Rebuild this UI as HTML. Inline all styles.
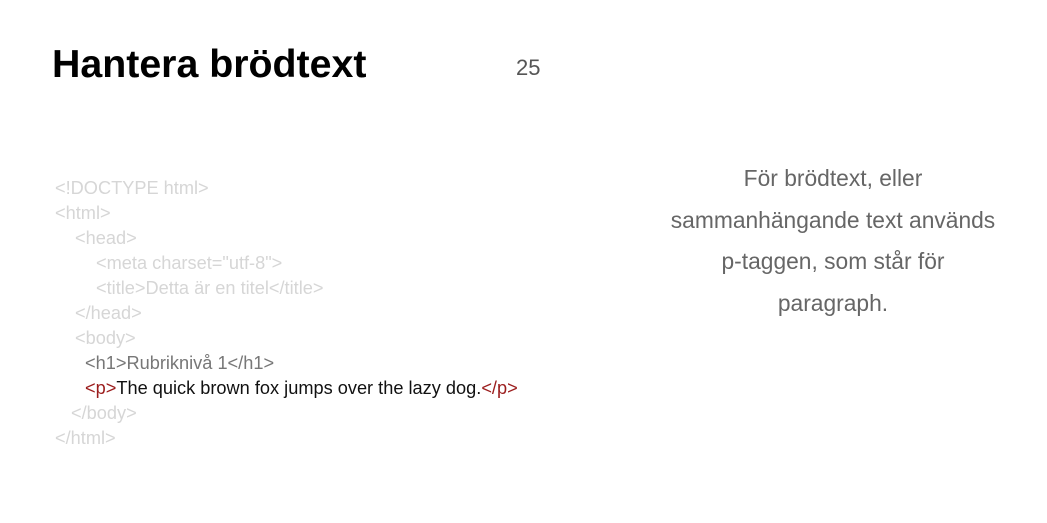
<!DOCTYPE html>
<html><head><meta charset="utf-8"><style>
body{margin:0;width:1047px;height:523px;background:#fff;font-family:"Liberation Sans",Arial,sans-serif;position:relative;overflow:hidden}
.t{position:absolute;left:52px;top:40px;font-size:39.3px;font-weight:bold;color:#000;line-height:48px}
.n{position:absolute;left:516px;top:54px;font-size:22px;color:#555;line-height:28px}
.code{position:absolute;left:55px;top:176px;font-size:18.2px;line-height:25px;color:#d6d6d6}
.code div{height:25px;white-space:pre}
.code .m{color:#777}.code .r{color:#9b1c1c}.code .k{color:#111}
.right{position:absolute;left:583px;width:500px;top:158px;text-align:center;font-size:22.8px;line-height:41.5px;color:#666}
</style></head><body>
<div class="t">Hantera brödtext</div>
<div class="n">25</div>
<div class="code"><div>&lt;!DOCTYPE html&gt;</div><div>&lt;html&gt;</div><div style="padding-left:20px">&lt;head&gt;</div><div style="padding-left:41px">&lt;meta charset="utf-8"&gt;</div><div style="padding-left:41px">&lt;title&gt;Detta är en titel&lt;/title&gt;</div><div style="padding-left:20px">&lt;/head&gt;</div><div style="padding-left:20px">&lt;body&gt;</div><div style="padding-left:30px" class="m">&lt;h1&gt;Rubriknivå 1&lt;/h1&gt;</div><div style="padding-left:30px"><span class="r">&lt;p&gt;</span><span class="k">The quick brown fox jumps over the lazy dog.</span><span class="r">&lt;/p&gt;</span></div><div style="padding-left:16px">&lt;/body&gt;</div><div>&lt;/html&gt;</div></div>
<div class="right">För brödtext, eller<br>sammanhängande text används<br>p-taggen, som står för<br>paragraph.</div>
</body></html>
